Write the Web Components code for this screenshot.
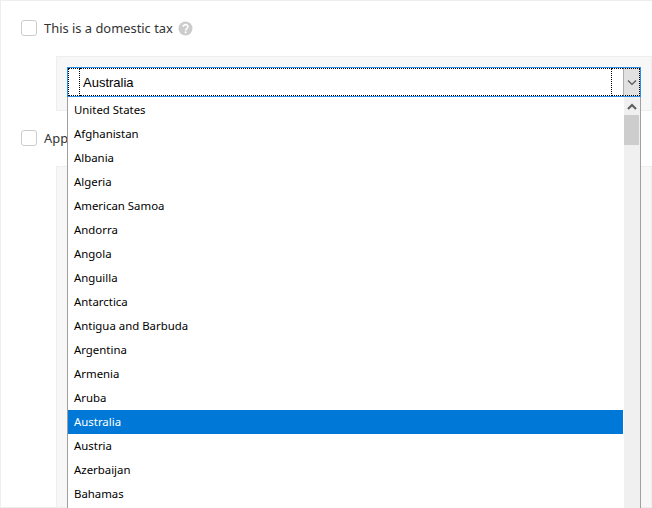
<!DOCTYPE html>
<html><head><meta charset="utf-8"><style>
html,body{margin:0;padding:0;height:100%;overflow:hidden;background:#fff}
body{font:11.4px "Noto Sans",sans-serif;color:#222}
</style></head><body>
<tax-form>
  <tax-check hint>This is a domestic tax</tax-check>
  <tax-panel first><country-select value="Australia"></country-select></tax-panel>
  <tax-check>App</tax-check>
  <tax-panel></tax-panel>
</tax-form>
<script>
const el=(name,html)=>customElements.define(name,class extends HTMLElement{
  constructor(){super();this.attachShadow({mode:'open'}).innerHTML=html(this)}
});
el('tax-form',()=>`<style>:host{display:flex;flex-direction:column;box-sizing:border-box;height:508px;border:1px solid #eee;border-right:0;padding-left:20px}</style><slot></slot>`);
el('tax-check',()=>`<style>
:host{display:flex;align-items:center;height:54px;margin-bottom:1px;flex:none;font-size:12.9px;color:#333}
i{box-sizing:border-box;width:16px;height:16px;border:1px solid #ccc;border-radius:3px;background:#fff;margin-right:7px}
svg{margin-left:5px}
:host(:not([hint])) svg{display:none}
</style><i></i><slot></slot><svg width="15" height="15" viewBox="0 0 15 15"><circle cx="7.5" cy="7.5" r="7" fill="#ccc"/><path d="M5.2 5.8a2.3 2.2 0 1 1 3.6 1.8c-.8.6-1.2.9-1.2 1.9" fill="none" stroke="#fff" stroke-width="1.7"/><rect x="6.7" y="10.4" width="1.8" height="1.8" fill="#fff"/></svg>`);
el('tax-panel',()=>`<style>
:host{display:block;box-sizing:border-box;flex:none;margin-left:35px;background:#f7f7f7;border:1px solid #eee;padding:10px}
:host([first]){height:55px}
:host(:not([first])){flex:1;border-bottom:0}
</style><slot></slot>`);
const countries=['United States','Afghanistan','Albania','Algeria','American Samoa','Andorra','Angola','Anguilla','Antarctica','Antigua and Barbuda','Argentina','Armenia','Aruba','Australia','Austria','Azerbaijan','Bahamas'];
el('country-select',h=>`<style>
:host{display:block;position:relative;height:30px;width:574px;box-sizing:border-box;color:#000}
.box{box-sizing:border-box;height:30px;display:flex;border:1px solid #2b8fe8;background:#fff;align-items:stretch}
.box>div{box-sizing:border-box;border-top:1px dotted #000;border-bottom:1px dotted #000}
.gut{width:12px;flex:none;border-right:1px dotted #000;border-left:1px dotted #000}
.box>.val{flex:1;padding:1px 0 0 3px;font:13px/26px "Liberation Sans",sans-serif;border-right:1px dotted #000}
.gap{width:11px;flex:none}
.box>.arrow{width:17px;flex:none;background:#e1e1e1;border-left:1px solid #adadad;border-right:1px dotted #000;display:flex;align-items:center;justify-content:center}
.list{position:absolute;left:0;top:30px;width:574px;height:420px;box-sizing:border-box;background:#fff;border-left:1px solid #a0a0a0;border-right:1px solid #a0a0a0;display:flex;overflow:hidden}
ul{list-style:none;margin:0;padding:1px 1px 0 0;flex:1}
li{height:24px;line-height:24px;padding-left:6px;white-space:nowrap}
li.on{background:#0078d7;color:#fff}
.bar{width:16px;background:#f0f0f0;display:flex;flex-direction:column;flex:none}
.up{height:18px;display:flex;align-items:center;justify-content:center;flex:none}
.thumb{height:30px;margin-right:1px;background:#cdcdcd;flex:none}
</style>
<div class="box"><div class="gut"></div><div class="val">${h.getAttribute('value')}</div><div class="gap"></div><div class="arrow"><svg width="10" height="7" viewBox="0 0 10 7"><path d="M1 1.5l4 4 4-4" fill="none" stroke="#555" stroke-width="1.2"/></svg></div></div>
<div class="list"><ul>${countries.map(c=>`<li class="${c===h.getAttribute('value')?'on':''}">${c}</li>`).join('')}</ul>
<div class="bar"><div class="up"><svg width="10" height="7" viewBox="0 0 10 7"><path d="M1 6l4-4 4 4" fill="none" stroke="#606060" stroke-width="2.2"/></svg></div><div class="thumb"></div></div></div>`);
</script>
</body></html>
